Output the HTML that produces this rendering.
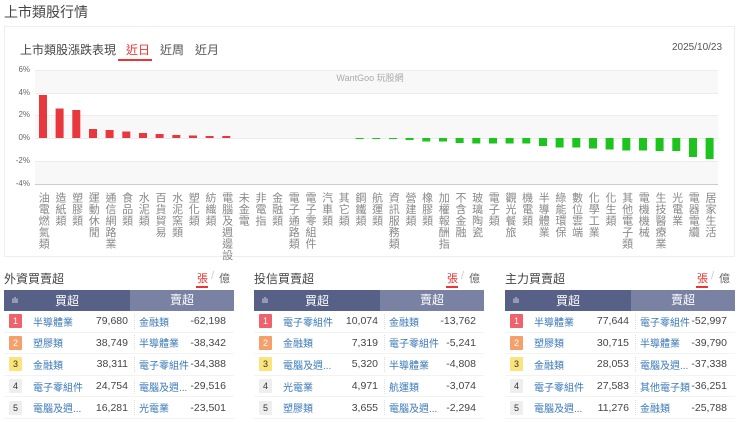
<!DOCTYPE html>
<html><head><meta charset="utf-8"><style>
*{margin:0;padding:0;box-sizing:border-box}
body{width:740px;height:422px;background:#fff;font-family:"Liberation Sans","Noto Sans CJK TC",sans-serif;position:relative;overflow:hidden;color:#444}
.a{position:absolute;white-space:nowrap}
.lab{position:absolute;top:192px;width:14px;writing-mode:vertical-rl;font-size:11px;line-height:14px;color:#888;letter-spacing:0.5px}
.ax{position:absolute;left:8px;width:22px;text-align:right;font-size:8px;color:#666}
.tbl{position:absolute;top:290px;width:230px;font-size:10.5px}
.hd{height:21px;display:flex;color:#fff;font-size:12px}
.hd .b{width:126px;background:#576086;display:flex;align-items:center}
.hd .s{flex:1;background:#7a82a4;text-align:center;line-height:21px}
.row{height:21.6px;display:flex;align-items:center;border-bottom:1px solid #f3f3f3;white-space:nowrap}
.rk{width:13px;height:14px;margin-left:5px;font-size:9px;text-align:center;line-height:14px;color:#333;border-radius:1px;flex:none}
.n1{color:#3a78b8;margin-left:11px;width:59px;flex:none;white-space:nowrap;font-size:10px}
.v1{width:36px;text-align:right;color:#444;flex:none}
.n2{color:#3a78b8;margin-left:6px;width:56px;flex:none;border-left:1px dotted #ddd;padding-left:4px;white-space:nowrap;overflow:visible;font-size:10px}
.v2{width:36px;flex:none;text-align:right;color:#444}
</style></head><body>
<div class="a" style="left:4px;top:2px;font-size:14px;color:#444">上市類股行情</div>
<div class="a" style="left:4px;top:26px;width:731px;height:231px;border:1px solid #eee"></div>
<div class="a" style="left:20px;top:41px;font-size:12px;color:#444">上市類股漲跌表現</div>
<div class="a" style="left:126px;top:41px;font-size:12px;color:#e33">近日</div>
<div class="a" style="left:118px;top:59px;width:34px;height:2px;background:#e33"></div>
<div class="a" style="left:160px;top:41px;font-size:12px;color:#555">近周</div>
<div class="a" style="left:195px;top:41px;font-size:12px;color:#555">近月</div>
<div class="a" style="left:672px;top:42px;font-size:10px;color:#555">2025/10/23</div>
<div class="ax" style="top:65px">6%</div><div class="ax" style="top:88px">4%</div><div class="ax" style="top:110px">2%</div><div class="ax" style="top:133px">0%</div><div class="ax" style="top:156px">-2%</div><div class="ax" style="top:179px">-4%</div>
<svg class="a" style="left:0;top:0" width="740" height="200">
<rect x="35" y="70" width="683" height="23" fill="#f8f8f8"/>
<rect x="35" y="115" width="683" height="23" fill="#f8f8f8"/>
<rect x="35" y="161" width="683" height="23" fill="#f8f8f8"/>
<g stroke="#ececec" stroke-width="1"><line x1="35" x2="718" y1="70.5" y2="70.5"/><line x1="35" x2="718" y1="93.5" y2="93.5"/><line x1="35" x2="718" y1="115.5" y2="115.5"/><line x1="35" x2="718" y1="138.5" y2="138.5"/><line x1="35" x2="718" y1="161.5" y2="161.5"/></g>
<line x1="35" x2="718" y1="184.5" y2="184.5" stroke="#ccc"/>
<text x="370" y="81" font-size="9" fill="#aaa" text-anchor="middle" font-family="Liberation Sans,Noto Sans CJK TC,sans-serif">WantGoo 玩股網</text>
<g fill="#e8383d">
<rect x="39" y="95" width="8" height="43"/><rect x="55.6" y="108.5" width="8" height="29.5"/><rect x="72.3" y="110" width="8" height="28"/><rect x="89" y="129" width="8" height="9"/><rect x="105.6" y="130" width="8" height="8"/><rect x="122.3" y="131.5" width="8" height="6.5"/><rect x="139" y="133" width="8" height="5"/><rect x="155.6" y="134" width="8" height="4"/><rect x="172.3" y="135" width="8" height="3"/><rect x="189" y="135.5" width="8" height="2.5"/><rect x="205.6" y="136" width="8" height="2"/><rect x="222.3" y="136" width="8" height="2"/>
</g>
<g fill="#1ec41e">
<rect x="355.6" y="138" width="8" height="1"/><rect x="372.3" y="138" width="8" height="1"/><rect x="389" y="138" width="8" height="1"/><rect x="405.6" y="138" width="8" height="2"/><rect x="422.3" y="138" width="8" height="3.5"/><rect x="439" y="138" width="8" height="3.5"/><rect x="455.6" y="138" width="8" height="5"/><rect x="472.3" y="138" width="8" height="5.5"/><rect x="489" y="138" width="8" height="5.5"/><rect x="505.6" y="138" width="8" height="5.5"/><rect x="522.3" y="138" width="8" height="5.5"/><rect x="539" y="138" width="8" height="8"/><rect x="555.6" y="138" width="8" height="9.5"/><rect x="572.3" y="138" width="8" height="9.5"/><rect x="589" y="138" width="8" height="10.5"/><rect x="605.6" y="138" width="8" height="11.5"/><rect x="622.3" y="138" width="8" height="12.5"/><rect x="639" y="138" width="8" height="12.5"/><rect x="655.6" y="138" width="8" height="13"/><rect x="672.3" y="138" width="8" height="13"/><rect x="689" y="138" width="8" height="19"/><rect x="705.6" y="138" width="8" height="21"/>
</g>
</svg>
<div class="lab" style="left:36.3px">油電燃氣類</div><div class="lab" style="left:53px">造紙類</div><div class="lab" style="left:69.6px">塑膠類</div><div class="lab" style="left:86.3px">運動休閒</div><div class="lab" style="left:103px">通信網路業</div><div class="lab" style="left:119.6px">食品類</div><div class="lab" style="left:136.3px">水泥類</div><div class="lab" style="left:153px">百貨貿易</div><div class="lab" style="left:169.6px">水泥窯類</div><div class="lab" style="left:186.3px">塑化類</div><div class="lab" style="left:203px">紡織類</div><div class="lab" style="left:219.6px">電腦及週邊設</div><div class="lab" style="left:236.3px">未金電</div><div class="lab" style="left:253px">非電指</div><div class="lab" style="left:269.6px">金融類</div><div class="lab" style="left:286.3px">電子通路類</div><div class="lab" style="left:303px">電子零組件</div><div class="lab" style="left:319.6px">汽車類</div><div class="lab" style="left:336.3px">其它類</div><div class="lab" style="left:353px">鋼鐵類</div><div class="lab" style="left:369.6px">航運類</div><div class="lab" style="left:386.3px">資訊服務類</div><div class="lab" style="left:403px">營建類</div><div class="lab" style="left:419.6px">橡膠類</div><div class="lab" style="left:436.3px">加權報酬指</div><div class="lab" style="left:453px">不含金融</div><div class="lab" style="left:469.6px">玻璃陶瓷</div><div class="lab" style="left:486.3px">電子類</div><div class="lab" style="left:503px">觀光餐旅</div><div class="lab" style="left:519.6px">機電類</div><div class="lab" style="left:536.3px">半導體業</div><div class="lab" style="left:553px">綠能環保</div><div class="lab" style="left:569.6px">數位雲端</div><div class="lab" style="left:586.3px">化學工業</div><div class="lab" style="left:603px">化生類</div><div class="lab" style="left:619.6px">其他電子類</div><div class="lab" style="left:636.3px">電機機械</div><div class="lab" style="left:653px">生技醫療業</div><div class="lab" style="left:669.6px">光電業</div><div class="lab" style="left:686.3px">電器電纜</div><div class="lab" style="left:703px">居家生活</div>

<div class="a" style="left:4px;top:270px;font-size:12px">外資買賣超</div>
<div class="a" style="left:197px;top:270px;font-size:11px;color:#e33">張</div><div class="a" style="left:196px;top:286px;width:12px;height:2px;background:#e33"></div><div class="a" style="left:211px;top:270px;font-size:11px;color:#ccc">/</div><div class="a" style="left:219px;top:270px;font-size:11px;color:#666">億</div>
<div class="a" style="left:254px;top:270px;font-size:12px">投信買賣超</div>
<div class="a" style="left:447px;top:270px;font-size:11px;color:#e33">張</div><div class="a" style="left:446px;top:286px;width:12px;height:2px;background:#e33"></div><div class="a" style="left:461px;top:270px;font-size:11px;color:#ccc">/</div><div class="a" style="left:469px;top:270px;font-size:11px;color:#666">億</div>
<div class="a" style="left:505px;top:270px;font-size:12px">主力買賣超</div>
<div class="a" style="left:697px;top:270px;font-size:11px;color:#e33">張</div><div class="a" style="left:696px;top:286px;width:12px;height:2px;background:#e33"></div><div class="a" style="left:711px;top:270px;font-size:11px;color:#ccc">/</div><div class="a" style="left:719px;top:270px;font-size:11px;color:#666">億</div>

<div class="tbl" style="left:4px">
<div class="hd"><div class="b"><span style="width:22px;text-align:center;font-size:8px">ılı</span><span style="flex:1;text-align:center;padding-right:22px">買超</span></div><div class="s">賣超</div></div>
<div class="row"><div class="rk" style="background:#f0626b;color:#fff">1</div><div class="n1">半導體業</div><div class="v1">79,680</div><div class="n2">金融類</div><div class="v2">-62,198</div></div>
<div class="row"><div class="rk" style="background:#f5a06a;color:#fff">2</div><div class="n1">塑膠類</div><div class="v1">38,749</div><div class="n2">半導體業</div><div class="v2">-38,342</div></div>
<div class="row"><div class="rk" style="background:#fbe47c">3</div><div class="n1">金融類</div><div class="v1">38,311</div><div class="n2">電子零組件</div><div class="v2">-34,388</div></div>
<div class="row"><div class="rk" style="background:#eee">4</div><div class="n1">電子零組件</div><div class="v1">24,754</div><div class="n2">電腦及週...</div><div class="v2">-29,516</div></div>
<div class="row"><div class="rk" style="background:#eee">5</div><div class="n1">電腦及週...</div><div class="v1">16,281</div><div class="n2">光電業</div><div class="v2">-23,501</div></div>
</div>
<div class="tbl" style="left:254px">
<div class="hd"><div class="b"><span style="width:22px;text-align:center;font-size:8px">ılı</span><span style="flex:1;text-align:center;padding-right:22px">買超</span></div><div class="s">賣超</div></div>
<div class="row"><div class="rk" style="background:#f0626b;color:#fff">1</div><div class="n1">電子零組件</div><div class="v1">10,074</div><div class="n2">金融類</div><div class="v2">-13,762</div></div>
<div class="row"><div class="rk" style="background:#f5a06a;color:#fff">2</div><div class="n1">金融類</div><div class="v1">7,319</div><div class="n2">電子零組件</div><div class="v2">-5,241</div></div>
<div class="row"><div class="rk" style="background:#fbe47c">3</div><div class="n1">電腦及週...</div><div class="v1">5,320</div><div class="n2">半導體業</div><div class="v2">-4,808</div></div>
<div class="row"><div class="rk" style="background:#eee">4</div><div class="n1">光電業</div><div class="v1">4,971</div><div class="n2">航運類</div><div class="v2">-3,074</div></div>
<div class="row"><div class="rk" style="background:#eee">5</div><div class="n1">塑膠類</div><div class="v1">3,655</div><div class="n2">電腦及週...</div><div class="v2">-2,294</div></div>
</div>
<div class="tbl" style="left:505px">
<div class="hd"><div class="b"><span style="width:22px;text-align:center;font-size:8px">ılı</span><span style="flex:1;text-align:center;padding-right:22px">買超</span></div><div class="s">賣超</div></div>
<div class="row"><div class="rk" style="background:#f0626b;color:#fff">1</div><div class="n1">半導體業</div><div class="v1">77,644</div><div class="n2">電子零組件</div><div class="v2">-52,997</div></div>
<div class="row"><div class="rk" style="background:#f5a06a;color:#fff">2</div><div class="n1">塑膠類</div><div class="v1">30,715</div><div class="n2">半導體業</div><div class="v2">-39,790</div></div>
<div class="row"><div class="rk" style="background:#fbe47c">3</div><div class="n1">金融類</div><div class="v1">28,053</div><div class="n2">電腦及週...</div><div class="v2">-37,338</div></div>
<div class="row"><div class="rk" style="background:#eee">4</div><div class="n1">電子零組件</div><div class="v1">27,583</div><div class="n2">其他電子類</div><div class="v2">-36,251</div></div>
<div class="row"><div class="rk" style="background:#eee">5</div><div class="n1">電腦及週...</div><div class="v1">11,276</div><div class="n2">金融類</div><div class="v2">-25,788</div></div>
</div>
</body></html>
